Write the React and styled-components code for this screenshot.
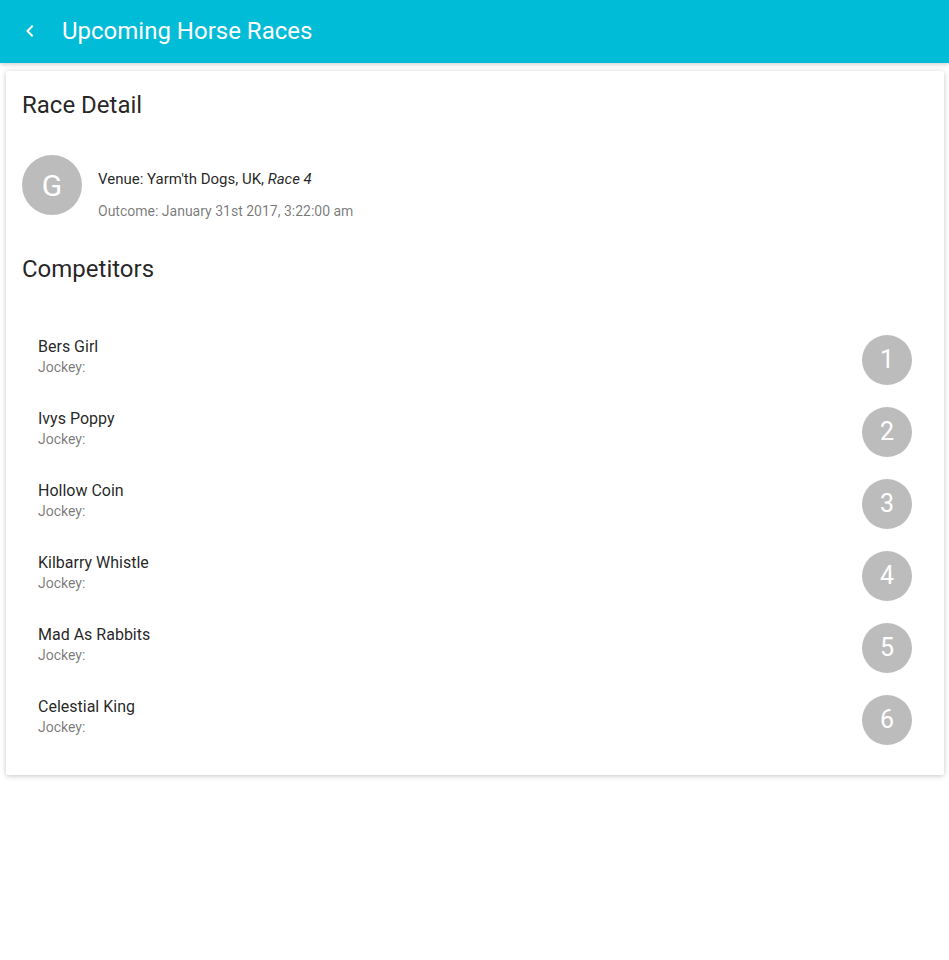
import React from "react";
import styled, { createGlobalStyle } from "styled-components";

const GlobalStyle = createGlobalStyle`
  *, *::before, *::after { box-sizing: border-box; }
  body {
    margin: 0;
    background: #fff;
    color: rgba(0, 0, 0, 0.87);
    font-family: Roboto, sans-serif;
  }
`;

const AppBar = styled.header`
  display: flex;
  align-items: center;
  gap: 8px;
  height: 63px;
  padding: 0 6px 2px;
  background: #00bcd7;
  color: #fff;
  box-shadow: 0 1px 6px rgba(0, 0, 0, 0.12), 0 1px 4px rgba(0, 0, 0, 0.12);
`;

const BackButton = styled.button`
  display: flex;
  align-items: center;
  justify-content: center;
  width: 48px;
  height: 48px;
  padding: 0;
  border: 0;
  background: none;
  color: inherit;
  cursor: pointer;
`;

const BarTitle = styled.h1`
  margin: 0;
  font-size: 24px;
  font-weight: 400;
  line-height: 32px;
`;

const Card = styled.main`
  margin: 8px 5px 8px 6px;
  padding: 16px 16px 20px;
  border-radius: 2px;
  background: #fff;
  box-shadow: 0 1px 6px rgba(0, 0, 0, 0.12), 0 1px 4px rgba(0, 0, 0, 0.12);
`;

const SectionTitle = styled.h2`
  margin: 0;
  font-size: 24px;
  font-weight: 400;
  line-height: 36px;
`;

const RaceSummary = styled.section`
  display: flex;
  gap: 16px;
  padding: 32px 0 28px;
`;

const Avatar = styled.span`
  flex: none;
  width: ${({ $size }) => $size}px;
  height: ${({ $size }) => $size}px;
  border-radius: 50%;
  background: #bcbcbc;
  color: #fff;
  font-size: ${({ $font }) => $font}px;
  line-height: ${({ $line }) => $line}px;
  text-align: center;
`;

const RaceText = styled.div`
  padding-top: 12px;
`;

const Venue = styled.p`
  margin: 0;
  font-size: 15px;
  line-height: 24px;
`;

const Outcome = styled.p`
  margin: 8px 0 0;
  color: rgba(0, 0, 0, 0.54);
  font-size: 14px;
  line-height: 24px;
`;

const CompetitorList = styled.ul`
  margin: 0;
  padding: 36px 0 0;
  list-style: none;
`;

const CompetitorRow = styled.li`
  display: flex;
  align-items: flex-start;
  justify-content: space-between;
  height: 72px;
  padding: 12px 16px 0;
`;

const Name = styled.div`
  font-size: 16px;
  line-height: 24px;
`;

const Jockey = styled.div`
  color: rgba(0, 0, 0, 0.54);
  font-size: 14px;
  line-height: 16px;
`;

const competitors = [
  "Bers Girl",
  "Ivys Poppy",
  "Hollow Coin",
  "Kilbarry Whistle",
  "Mad As Rabbits",
  "Celestial King",
];

export default function App() {
  return (
    <>
      <GlobalStyle />
      <AppBar>
        <BackButton type="button" aria-label="Back">
          <svg width="24" height="24" viewBox="0 0 24 24" fill="currentColor" aria-hidden="true">
            <path d="M15.41 7.41L14 6l-6 6 6 6 1.41-1.41L10.83 12z" />
          </svg>
        </BackButton>
        <BarTitle>Upcoming Horse Races</BarTitle>
      </AppBar>
      <Card>
        <SectionTitle>Race Detail</SectionTitle>
        <RaceSummary>
          <Avatar $size={60} $font={30} $line={62}>G</Avatar>
          <RaceText>
            <Venue>
              Venue: Yarm'th Dogs, UK, <em>Race 4</em>
            </Venue>
            <Outcome>Outcome: January 31st 2017, 3:22:00 am</Outcome>
          </RaceText>
        </RaceSummary>
        <SectionTitle>Competitors</SectionTitle>
        <CompetitorList>
          {competitors.map((name, index) => (
            <CompetitorRow key={name}>
              <div>
                <Name>{name}</Name>
                <Jockey>Jockey:</Jockey>
              </div>
              <Avatar $size={50} $font={25} $line={50}>{index + 1}</Avatar>
            </CompetitorRow>
          ))}
        </CompetitorList>
      </Card>
    </>
  );
}
